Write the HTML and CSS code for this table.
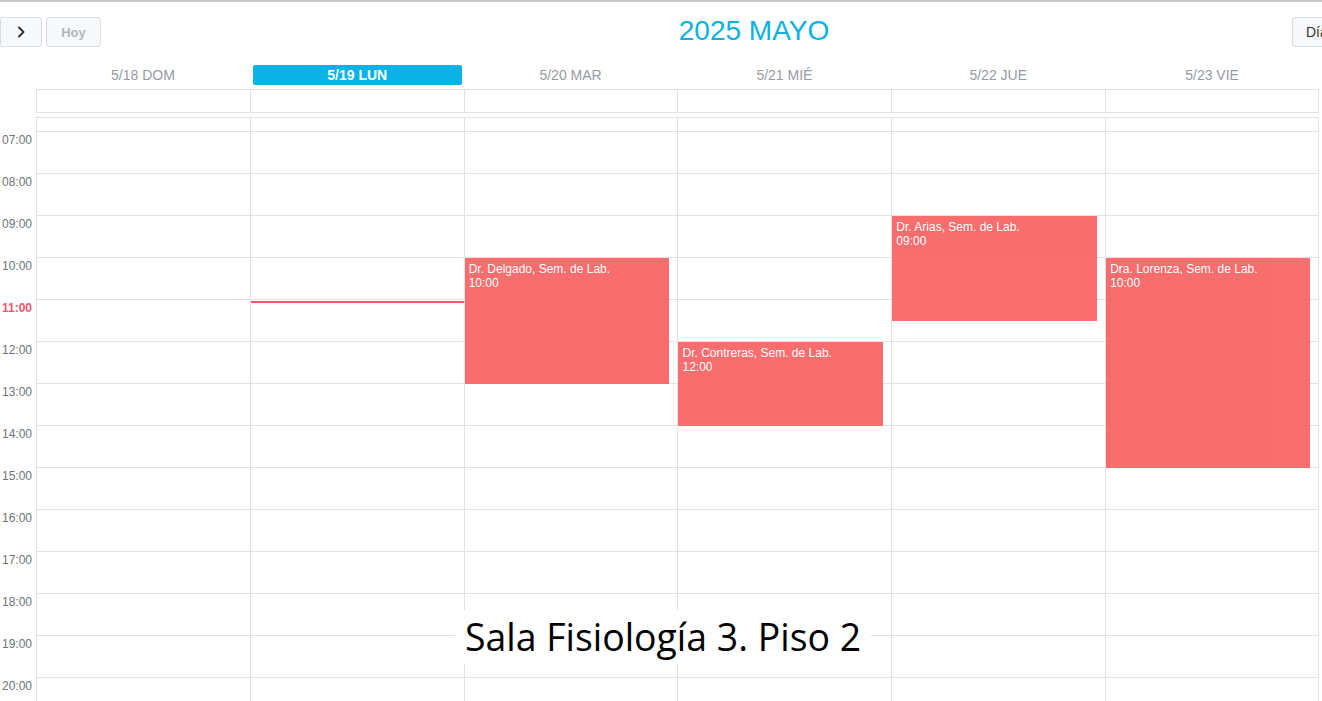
FILE: index.html
```html
<!DOCTYPE html>
<html lang="es">
<head>
<meta charset="utf-8">
<title>Calendario</title>
<link rel="stylesheet" href="styles.css">
</head>
<body>
<div class="page">
  <header class="topbar">
    <div class="nav-left">
      <button class="btn btn-icon" aria-label="Siguiente">
        <svg width="10" height="12" viewBox="0 0 10 12"><path d="M3 1.5 L7.5 6 L3 10.5" fill="none" stroke="#333" stroke-width="2" stroke-linecap="round" stroke-linejoin="round"/></svg>
      </button>
      <button class="btn btn-today">Hoy</button>
    </div>
    <h1 class="title">2025 MAYO</h1>
    <div class="nav-right">
      <button class="btn btn-view">Día</button>
    </div>
  </header>

  <div class="dayhead">
    <div class="gutter-space"></div>
    <div class="dh">5/18 DOM</div>
    <div class="dh today"><span>5/19 LUN</span></div>
    <div class="dh">5/20 MAR</div>
    <div class="dh">5/21 MIÉ</div>
    <div class="dh">5/22 JUE</div>
    <div class="dh">5/23 VIE</div>
  </div>

  <div class="allday">
    <div class="gutter-space"></div>
    <div class="ad"></div><div class="ad"></div><div class="ad"></div><div class="ad"></div><div class="ad"></div><div class="ad last"></div>
  </div>

  <div class="timegrid">
    <div class="gutter">
      <div class="lbl-pad"></div>
      <div class="lbl">07:00</div>
      <div class="lbl">08:00</div>
      <div class="lbl">09:00</div>
      <div class="lbl">10:00</div>
      <div class="lbl now">11:00</div>
      <div class="lbl">12:00</div>
      <div class="lbl">13:00</div>
      <div class="lbl">14:00</div>
      <div class="lbl">15:00</div>
      <div class="lbl">16:00</div>
      <div class="lbl">17:00</div>
      <div class="lbl">18:00</div>
      <div class="lbl">19:00</div>
      <div class="lbl">20:00</div>
    </div>

    <div class="col">
      <div class="slot first"></div><div class="slot"></div><div class="slot"></div><div class="slot"></div><div class="slot"></div><div class="slot"></div><div class="slot"></div><div class="slot"></div><div class="slot"></div><div class="slot"></div><div class="slot"></div><div class="slot"></div><div class="slot"></div><div class="slot"></div><div class="slot"></div>
    </div>

    <div class="col">
      <div class="slot first"></div><div class="slot"></div><div class="slot"></div><div class="slot"></div><div class="slot"></div><div class="slot"></div><div class="slot"></div><div class="slot"></div><div class="slot"></div><div class="slot"></div><div class="slot"></div><div class="slot"></div><div class="slot"></div><div class="slot"></div><div class="slot"></div>
      <div class="now-line" style="top:184px"></div>
    </div>

    <div class="col">
      <div class="slot first"></div><div class="slot"></div><div class="slot"></div><div class="slot"></div><div class="slot"></div><div class="slot"></div><div class="slot"></div><div class="slot"></div><div class="slot"></div><div class="slot"></div><div class="slot"></div><div class="slot"></div><div class="slot"></div><div class="slot"></div><div class="slot"></div>
      <div class="event" style="top:141px;height:126px"><div>Dr. Delgado, Sem. de Lab.</div><div>10:00</div></div>
    </div>

    <div class="col">
      <div class="slot first"></div><div class="slot"></div><div class="slot"></div><div class="slot"></div><div class="slot"></div><div class="slot"></div><div class="slot"></div><div class="slot"></div><div class="slot"></div><div class="slot"></div><div class="slot"></div><div class="slot"></div><div class="slot"></div><div class="slot"></div><div class="slot"></div>
      <div class="event" style="top:225px;height:84px"><div>Dr. Contreras, Sem. de Lab.</div><div>12:00</div></div>
    </div>

    <div class="col">
      <div class="slot first"></div><div class="slot"></div><div class="slot"></div><div class="slot"></div><div class="slot"></div><div class="slot"></div><div class="slot"></div><div class="slot"></div><div class="slot"></div><div class="slot"></div><div class="slot"></div><div class="slot"></div><div class="slot"></div><div class="slot"></div><div class="slot"></div>
      <div class="event" style="top:99px;height:105px"><div>Dr. Arias, Sem. de Lab.</div><div>09:00</div></div>
    </div>

    <div class="col last">
      <div class="slot first"></div><div class="slot"></div><div class="slot"></div><div class="slot"></div><div class="slot"></div><div class="slot"></div><div class="slot"></div><div class="slot"></div><div class="slot"></div><div class="slot"></div><div class="slot"></div><div class="slot"></div><div class="slot"></div><div class="slot"></div><div class="slot"></div>
      <div class="event" style="top:141px;height:210px"><div>Dra. Lorenza, Sem. de Lab.</div><div>10:00</div></div>
    </div>
  </div>

  <div class="room-label">Sala Fisiología 3. Piso 2</div>
</div>
</body>
</html>
```

FILE: styles.css
```css
* { box-sizing: border-box; }

html, body {
  margin: 0;
  padding: 0;
  height: 100%;
  overflow: hidden;
  background: #fff;
}

body {
  font-family: "Liberation Sans", Arial, sans-serif;
  color: #333;
}

.page {
  position: relative;
  width: 1322px;
  height: 701px;
  overflow: hidden;
  border-top: 2px solid #c9c9c9;
}

/* ---------- top bar ---------- */
.topbar {
  display: grid;
  grid-template-columns: 1fr auto 1fr;
  align-items: center;
  width: 1508px;
  height: 60px;
}

.nav-left {
  display: flex;
  gap: 4px;
  align-items: center;
}

.nav-right {
  display: flex;
  justify-content: flex-end;
  padding-right: 151px;
}

.btn {
  height: 30px;
  border: 1px solid #dadde1;
  border-radius: 3px;
  background: #f7f8f9;
  font-family: "Liberation Sans", Arial, sans-serif;
  padding: 0;
  display: flex;
  align-items: center;
  justify-content: center;
  flex: none;
}

.btn-icon {
  width: 42px;
}

.btn-today {
  width: 55px;
  font-size: 13px;
  font-weight: bold;
  color: #b2b6bc;
}

.btn-view {
  width: 65px;
  font-size: 14px;
  color: #333;
  justify-content: flex-start;
  padding-left: 13px;
}

.title {
  margin: 0;
  font-weight: normal;
  font-size: 28px;
  color: #0ab1e2;
  line-height: 1;
  margin-top: -2px;
}

/* ---------- shared column grid ---------- */
.dayhead,
.allday,
.timegrid {
  display: grid;
  grid-template-columns: 36px repeat(6, minmax(0, 1fr));
  margin-right: 3px;
}

/* ---------- day header ---------- */
.dayhead {
  height: 27px;
  align-items: start;
  padding-top: 3px;
}

.dh {
  text-align: center;
  font-size: 14px;
  color: #959ba5;
  height: 20px;
  line-height: 20px;
  white-space: nowrap;
}

.dh.today {
  padding: 0 2px 0 3px;
}

.dh.today span {
  display: block;
  background: #0ab3e3;
  color: #fff;
  font-weight: bold;
  border-radius: 2px;
  height: 20px;
  line-height: 20px;
}

/* ---------- all-day row ---------- */
.allday {
  height: 24px;
}

.ad {
  border-top: 1px solid #e2e2e2;
  border-bottom: 1px solid #e2e2e2;
  border-left: 1px solid #e2e2e2;
}

.ad.last {
  border-right: 1px solid #e2e2e2;
}

/* ---------- time grid ---------- */
.timegrid {
  margin-top: 4px;
}

.lbl-pad {
  height: 14px;
}

.lbl {
  height: 42px;
  padding: 2px 4px 0 0;
  text-align: right;
  font-size: 12px;
  line-height: 14px;
  color: #6c737c;
}

.lbl.now {
  color: #f0566a;
  font-weight: bold;
}

.col {
  position: relative;
  border-left: 1px solid #e2e2e2;
}

.col.last {
  border-right: 1px solid #e2e2e2;
}

.slot {
  height: 42px;
  border-top: 1px solid #e2e2e2;
}

.slot.first {
  height: 14px;
}

.now-line {
  position: absolute;
  left: 0;
  right: 0;
  height: 2px;
  background: #f05a66;
}

.event {
  position: absolute;
  left: 0;
  right: 8px;
  background: #f86262;
  opacity: 0.92;
  color: #fff;
  font-size: 12px;
  line-height: 14px;
  padding: 4px 4px;
  overflow: hidden;
  white-space: nowrap;
}

/* ---------- overlay label ---------- */
.room-label {
  position: absolute;
  top: 608px;
  left: 50%;
  transform: translateX(-50%);
  margin-left: 2px;
  background: #fff;
  padding: 3px 10px 3px;
  font-family: "Open Sans", sans-serif;
  font-size: 37.4px;
  line-height: 48px;
  color: #000;
  white-space: nowrap;
}
```
